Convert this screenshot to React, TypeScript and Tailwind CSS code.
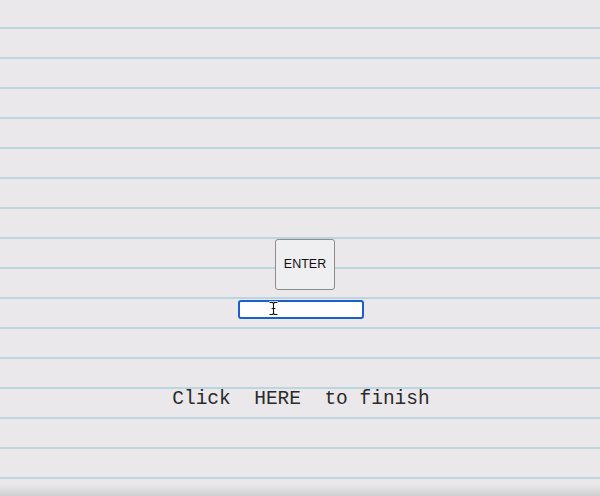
import React from "react";

const IBeam = () => (
    <svg width="9" height="15" viewBox="0 0 9 15" className="absolute left-[31px] top-[1px]">
        <path d="M1 1.5h2.5L4.5 2.5L5.5 1.5H8M4.5 2.5V12.5M1 13.5h2.5L4.5 12.5L5.5 13.5H8M3 7.5h3" fill="none" stroke="#fff" strokeWidth="2.6" strokeLinecap="round" />
        <path d="M1 1.5h2.5L4.5 2.5L5.5 1.5H8M4.5 2.5V12.5M1 13.5h2.5L4.5 12.5L5.5 13.5H8M3 7.5h3" fill="none" stroke="#111" strokeWidth="1.1" strokeLinecap="round" />
    </svg>
);

export default function App() {
    return (
        <div className="relative w-[600px] h-[496px] overflow-hidden bg-[#eae8eb] bg-[repeating-linear-gradient(to_bottom,transparent_0px,transparent_27px,#bcd6df_27px,#bcd6df_29px,transparent_29px,transparent_30px)]">
            <div className="flex flex-col items-center pt-[239px]">
                {/* the button */}
                <button
                    type="button"
                    className="ml-[10px] w-[60px] h-[51px] rounded-[3px] border border-[#8d8d8f] bg-[#efeef0] text-[12.5px] text-[#111] font-['Liberation_Sans',Arial,sans-serif]"
                >
                    ENTER
                </button>

                {/* focused input */}
                <div className="relative mt-[10px] ml-[1px]">
                    <input
                        type="text"
                        className="block w-[126px] h-[19px] rounded-[3px] border-2 border-[#1a5fcc] bg-white outline-none"
                    />
                    <IBeam />
                </div>

                <p className="mt-[68px] ml-[2px] whitespace-pre text-[19.5px] leading-[24px] text-[#2a2a2a] font-['Courier_New','Liberation_Mono',monospace]">
                    Click  HERE  to finish
                </p>
            </div>

            {/* bottom shade */}
            <div className="absolute left-0 right-0 bottom-0 h-[12px] bg-gradient-to-b from-[#e6e5e7]/0 to-[#cfcfd0]" />
        </div>
    );
}
